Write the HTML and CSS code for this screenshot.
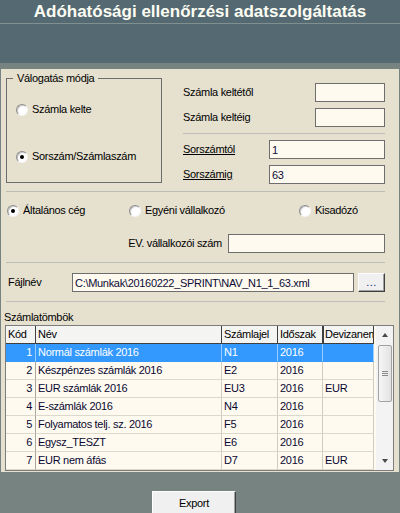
FILE: index.html
```html
<!DOCTYPE html>
<html lang="hu">
<head>
<meta charset="utf-8">
<title>Adóhatósági ellenőrzési adatszolgáltatás</title>
<link rel="stylesheet" href="styles.css">
</head>
<body>
<header class="titlebar">
  <h1 class="title">Adóhatósági ellenőrzési adatszolgáltatás</h1>
</header>
<div class="toolband"></div>
<main class="panel">
  <div class="top">
    <fieldset class="group">
      <legend>Válogatás módja</legend>
      <div class="group-body">
        <label class="radio"><span class="rb"></span>Számla kelte</label>
        <label class="radio second"><span class="rb on"></span>Sorszám/Számlaszám</label>
      </div>
    </fieldset>
    <div class="fields">
      <div class="frow"><span>Számla keltétől</span><input class="input w70" type="text" value="" readonly></div>
      <div class="frow"><span>Számla keltéig</span><input class="input w70" type="text" value="" readonly></div>
      <div class="sep"></div>
      <div class="frow"><span class="u">Sorszámtól</span><input class="input w116" type="text" value="1" readonly></div>
      <div class="frow"><span class="u">Sorszámig</span><input class="input w116" type="text" value="63" readonly></div>
    </div>
  </div>
  <div class="sep s1"></div>
  <div class="kind">
    <label class="radio k1"><span class="rb on"></span>Általános cég</label>
    <label class="radio k2"><span class="rb"></span>Egyéni vállalkozó</label>
    <label class="radio"><span class="rb"></span>Kisadózó</label>
  </div>
  <div class="ev">
    <span>EV. vállalkozói szám</span>
    <input class="input w157" type="text" value="" readonly>
  </div>
  <div class="sep s2"></div>
  <div class="file">
    <span class="flabel">Fájlnév</span>
    <input class="input w282" type="text" value="C:\Munkak\20160222_SPRINT\NAV_N1_1_63.xml" readonly>
    <button class="btn dots" type="button">...</button>
  </div>
  <div class="sep s3"></div>
  <div class="caption">Számlatömbök</div>
  <div class="gridbox">
    <div class="gridarea">
      <table class="grid">
        <colgroup>
          <col class="c1"><col class="c2"><col class="c3"><col class="c4"><col class="c5">
        </colgroup>
        <thead>
          <tr><th>Kód</th><th>Név</th><th>Számlajel</th><th>Időszak</th><th class="focus">Devizanem</th></tr>
        </thead>
        <tbody>
          <tr class="sel"><td class="num">1</td><td>Normál számlák 2016</td><td>N1</td><td>2016</td><td></td></tr>
          <tr><td class="num">2</td><td>Készpénzes számlák 2016</td><td>E2</td><td>2016</td><td></td></tr>
          <tr><td class="num">3</td><td>EUR számlák 2016</td><td>EU3</td><td>2016</td><td>EUR</td></tr>
          <tr><td class="num">4</td><td>E-számlák 2016</td><td>N4</td><td>2016</td><td></td></tr>
          <tr><td class="num">5</td><td>Folyamatos telj. sz. 2016</td><td>F5</td><td>2016</td><td></td></tr>
          <tr><td class="num">6</td><td>Egysz_TESZT</td><td>E6</td><td>2016</td><td></td></tr>
          <tr><td class="num">7</td><td>EUR nem áfás</td><td>D7</td><td>2016</td><td>EUR</td></tr>
        </tbody>
      </table>
    </div>
    <div class="sb">
      <div class="sb-btn"><span class="tri up"></span></div>
      <div class="sb-thumb"><span class="grip"></span></div>
      <div class="sb-btn down"><span class="tri dn"></span></div>
    </div>
  </div>
</main>
<footer class="footer">
  <button class="btn export" type="button">Export</button>
</footer>
</body>
</html>
```
FILE: styles.css
```css
* { box-sizing: border-box; }
html, body { margin: 0; padding: 0; }
body {
  width: 400px;
  height: 513px;
  overflow: hidden;
  background: #768381;
  font-family: "Liberation Sans", Arial, sans-serif;
  font-size: 11px;
  line-height: 13px;
  letter-spacing: -0.3px;
  color: #000;
}

.titlebar {
  height: 24px;
  background: #546972;
  border-bottom: 1px solid #80908f;
}
.title {
  margin: 0;
  font-size: 17px;
  line-height: 23px;
  font-weight: bold;
  letter-spacing: 0;
  text-align: center;
  color: #fdfdf2;
}
.toolband { height: 39px; background: #546972; }

.panel {
  margin: 6px 1px 0;
  height: 403px;
  background: #e6e0cf;
  padding: 0 14px 0 5px;
  display: flex;
  flex-direction: column;
}

.top { display: flex; align-items: flex-start; }

.group {
  margin: 3px 0 0;
  width: 156px;
  height: 111px;
  border: 1px solid #6d6d6d;
  padding: 0 9px;
  min-width: 0;
}
.group legend {
  margin-left: -3px;
  padding: 0 4px;
  line-height: 13px;
}
.group-body { display: flex; flex-direction: column; padding-top: 18px; }
.group-body .second { margin-top: 34px; }

.radio { display: flex; align-items: center; gap: 4px; height: 13px; white-space: nowrap; }
.rb {
  position: relative;
  flex: none;
  width: 12px;
  height: 12px;
  border-radius: 50%;
  border: 1px solid;
  border-color: #8d8d8d #f4f4f4 #f4f4f4 #8d8d8d;
  background: #fff;
  box-shadow: inset 1px 1px 0 #c8c8c8;
}
.rb.on::after {
  content: "";
  position: absolute;
  left: 3px;
  top: 3px;
  width: 4px;
  height: 4px;
  border-radius: 50%;
  background: #000;
}

.fields {
  margin: 14px 0 0 21px;
  width: 202px;
  display: flex;
  flex-direction: column;
  gap: 6px;
}
.frow { display: flex; justify-content: space-between; align-items: center; height: 19px; }
.u { text-decoration: underline; }

.input {
  display: block;
  height: 19px;
  margin: 0;
  padding: 0 2px;
  border: 1px solid #6e6e6e;
  border-radius: 0;
  background: #fffaef;
  font: inherit;
  letter-spacing: inherit;
  color: #0b0b36;
  outline: none;
}
.w70 { width: 70px; }
.w116 { width: 116px; }
.w157 { width: 157px; }
.w282 { width: 282px; }

.sep { height: 1px; background: #bdbcb6; flex: none; }
.s1 { margin-top: 7px; }
.s2 { margin-top: 9px; }
.s3 { margin-top: 9px; }

.kind { margin-top: 9px; height: 19px; display: flex; align-items: center; padding-left: 1px; }
.kind .k1 { width: 122px; }
.kind .k2 { width: 170px; }

.ev { margin-top: 14px; display: flex; justify-content: flex-end; align-items: center; gap: 6px; height: 19px; }

.file { margin-top: 10px; display: flex; align-items: center; height: 19px; padding-left: 2px; }
.flabel { width: 64px; }

.btn {
  margin: 0;
  padding: 0;
  font: inherit;
  letter-spacing: inherit;
  background: #f0f0f0;
  border: 1px solid;
  border-color: #ffffff #404040 #404040 #ffffff;
  box-shadow: inset -1px -1px 0 #a0a0a0;
  border-radius: 0;
  color: #000;
}
.dots {
  margin-left: 4px;
  width: 27px;
  height: 19px;
  line-height: 15px;
  color: #1a1a7a;
  letter-spacing: 0.5px;
}

.caption { margin: 9px 0 0 -2px; height: 13px; }

.gridbox {
  margin: 1px -9px 0 -1px;
  height: 146px;
  border: 1px solid #7c7c7c;
  display: flex;
  background: #fffaf0;
}
.gridarea { width: 371px; overflow: hidden; }
.grid {
  width: 368px;
  table-layout: fixed;
  border-collapse: separate;
  border-spacing: 0;
}
.c1 { width: 30px; }
.c2 { width: 186px; }
.c3 { width: 56px; }
.c4 { width: 45px; }
.c5 { width: 51px; }
.grid th, .grid td {
  height: 18px;
  padding: 0 2px;
  white-space: nowrap;
  overflow: hidden;
  text-align: left;
  font-weight: normal;
  vertical-align: middle;
}
.grid th {
  background: #f4f4f2;
  border-right: 1px solid #3f3f3f;
  border-bottom: 1px solid #3f3f3f;
  text-overflow: clip;
}
.grid th.focus { box-shadow: inset 1px 0 0 #3f3f3f; padding-right: 0; }
.grid td {
  background: #fffaf0;
  color: #080830;
  border-right: 1px solid #d0ccc0;
  border-bottom: 1px solid #dcd8cc;
}
.grid td.num { text-align: right; padding-right: 3px; border-right-color: #a9a69c; }
.grid tr.sel td {
  background: #3399ff;
  color: #fff;
  border-right-color: #9ccbff;
  border-bottom-color: #3399ff;
}

.sb {
  width: 17px;
  background: #f3f3f3;
  display: flex;
  flex-direction: column;
  align-items: center;
}
.sb-btn { height: 18px; width: 100%; display: flex; align-items: center; justify-content: center; }
.sb-btn.down { margin-top: auto; }
.tri { width: 0; height: 0; border-left: 3px solid transparent; border-right: 3px solid transparent; }
.tri.up { border-bottom: 4px solid #4a4a4a; }
.tri.dn { border-top: 4px solid #4a4a4a; }
.sb-thumb {
  margin-top: 1px;
  width: 14px;
  height: 57px;
  border: 1px solid #a2a2a2;
  border-radius: 2px;
  background: linear-gradient(to right, #f6f6f6, #e2e2e2);
  display: flex;
  align-items: center;
  justify-content: center;
}
.grip {
  width: 6px;
  height: 5px;
  border-top: 1px solid #8a8a8a;
  border-bottom: 1px solid #8a8a8a;
  background: linear-gradient(#8a8a8a, #8a8a8a) center / 100% 1px no-repeat;
}

.footer { height: 41px; padding: 19px 0 0 152px; }
.export { display: block; width: 84px; height: 25px; line-height: 21px; }
```
